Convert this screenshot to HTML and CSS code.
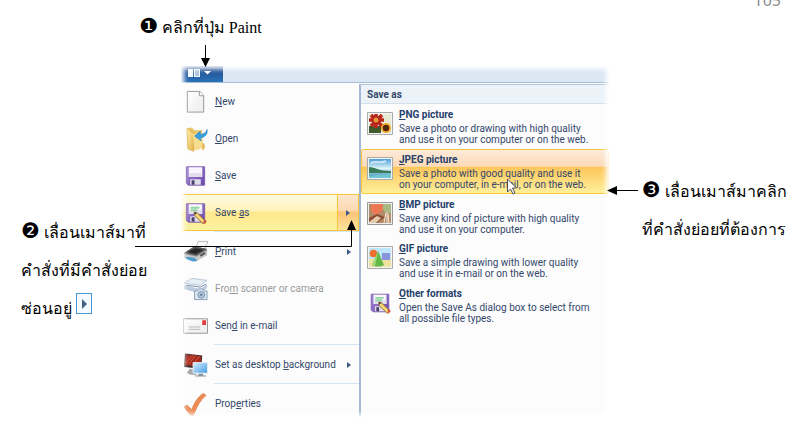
FILE: index.html
```
<!DOCTYPE html>
<html lang="th">
<head>
<meta charset="utf-8">
<title>Paint – Save as</title>
<link rel="stylesheet" href="styles.css">
</head>
<body>
<svg class="defs" aria-hidden="true">
<defs>
<linearGradient id="pur" x2="1" y2="1"><stop offset="0" stop-color="#a98ad6"/><stop offset="1" stop-color="#6c45aa"/></linearGradient>
<linearGradient id="fold" x2="1" y2="1"><stop offset="0" stop-color="#fff0a8"/><stop offset="1" stop-color="#e3b24c"/></linearGradient>
<linearGradient id="sky" y2="1" x2="0"><stop offset="0" stop-color="#4c9ed8"/><stop offset=".5" stop-color="#dff5fa"/><stop offset="1" stop-color="#2488b4"/></linearGradient>
<linearGradient id="scr" x2="1" y2="1"><stop offset="0" stop-color="#d6f0ff"/><stop offset="1" stop-color="#439be6"/></linearGradient>
<linearGradient id="paper" x2="1" y2="1"><stop offset="0" stop-color="#fff"/><stop offset="1" stop-color="#ececec"/></linearGradient>
<symbol id="floppy" viewBox="0 0 26 26"><path d="M3.500 3.500h19v19h-17l-2-2z" fill="url(#pur)" stroke="#7a5cb0"/><path d="M6 4h14v10H6z" fill="#f8f6fc"/><path d="M6 10h14v4H6z" fill="#e2deeb"/><path d="M7.500 16.500h11V22h-11z" fill="#dcdde8"/><path d="M9 17.500h3V22H9z" fill="#4b4070"/></symbol>
<symbol id="pencil" viewBox="0 0 26 26"><path d="M8 7.500h9M8 10h7" stroke="#8fd6a0" stroke-width="2"/><path d="m11.500 12 3 .500 9 9-2.500 3-9-9z" fill="#efc75c" stroke="#8a6430" stroke-width=".8"/><path d="m11.500 12 1 3 2-2z" fill="#333"/><path d="m20.500 22 2.500-2.500 1.500 2.500-2 2.500z" fill="#cb5043"/><path d="m13 14 8.500 8.500" stroke="#fff1a6"/></symbol>
</defs>
</svg>
<p class="page-number">105</p>
<main class="figure">
  <p class="note note-one"><span class="num">❶</span> คลิกที่ปุ่ม Paint</p>
  <p class="note note-two"><span class="num">❷</span> เลื่อนเมาส์มาที่<br>คำสั่งที่มีคำสั่งย่อย<br>ซ่อนอยู่ <span class="key"><svg viewBox="0 0 14 19"><path d="m5 5 5 5-5 5z" fill="#456085"/></svg></span></p>
  <section class="window">
    <div class="tabs">
      <button class="paint-button" aria-label="Paint"><svg viewBox="0 0 42 16"><path d="M7 3h12v8H7z" fill="#f2f8ff"/><path d="M12.500 3v8" stroke="#477ab8"/><path d="M14 5h4M14 7h4M14 9h4" stroke="#6c92c2"/><path d="M23 5h7l-3.500 3.500z" fill="#fff"/></svg></button>
    </div>
    <div class="panes">
      <nav class="menu">
        <button class="item"><svg class="icon" viewBox="0 0 26 26"><path d="M4.500 2h13l4 4v17.500h-17z" fill="url(#paper)" stroke="#989898"/><path d="M17 2v4.500h4.500" fill="#fff" stroke="#989898"/></svg><span><u>N</u>ew</span></button>
        <button class="item"><svg class="icon" viewBox="0 0 26 26"><path d="m4 2 5-1 3 3h8v17l-4 3H5z" fill="#e9c266"/><path d="m4 2 7 5v19l-6-3z" fill="url(#fold)" stroke="#d4a544" stroke-width=".6"/><path d="m10 8 10-2 1 16-9 3z" fill="#f6dd90"/><path d="M20 17c3 0 4 7 0 8" fill="#e3b453"/><path d="M25 3c1 5-2 8-7 9l1 3-7-5 6-5v3c4 0 6-2 7-5z" fill="#38a0df" stroke="#2381bd" stroke-width=".6"/></svg><span><u>O</u>pen</span></button>
        <button class="item"><svg class="icon" viewBox="0 0 26 26"><use href="#floppy"/></svg><span><u>S</u>ave</span></button>
        <button class="item selected"><svg class="icon" viewBox="0 0 26 26"><use href="#floppy"/><use href="#pencil"/></svg><span>Save <u>a</u>s</span><span class="more"><svg viewBox="0 0 4 6"><path d="m0 0 4 3-4 3z"/></svg></span></button>
        <hr>
        <button class="item"><svg class="icon" viewBox="0 0 26 26"><path d="m13 9 3-7h10l-4 9z" fill="#fafafa" stroke="#999" stroke-width=".7"/><path d="m1 14 11-7 13 3v6l-12 7-12-4z" fill="#999"/><path d="m1 14 11-7 13 3-11 7z" fill="#555"/><path d="m5 13 8-4 8 2-8 4z" fill="#252525"/><path d="m1 15 13 3 11-6v4l-12 7-12-4z" fill="#c8c8c8"/><path d="m3 18 9 1 3 3-5 1-7-3z" fill="#4a9ccc"/><path d="m18 17 5-3" stroke="#505050" stroke-width="2"/></svg><span><u>P</u>rint</span><span class="more"><svg viewBox="0 0 4 6"><path d="m0 0 4 3-4 3z"/></svg></span></button>
        <button class="item disabled" disabled><svg class="icon" viewBox="0 0 26 26"><path d="m1 7 8-5 16 2-7 5z" fill="#e8f0f7" stroke="#9eb3c9" stroke-width=".7"/><path d="m1 9 17 4 7-5v4l-7 6-17-5z" fill="#becddd"/><path d="m3 9 15 2 6-3" fill="none" stroke="#758ea9"/><path d="M12 15h3l1-2h5l1 2h3v9H12z" fill="#dde7f0" stroke="#8aa0bb"/><circle cx="19" cy="19" r="3.500" fill="#b6c8dc" stroke="#7891ae"/><circle cx="19" cy="19" r="1.300" fill="#687fa0"/></svg><span>Fro<u>m</u> scanner or camera</span></button>
        <button class="item"><svg class="icon" viewBox="0 0 26 26"><path d="M.500 5.500h25v15H.500z" fill="url(#paper)" stroke="#999"/><path d="M20 7h4v5h-4z" fill="#df3c3c"/><path d="M6 14h12M6 16.500h12" stroke="#b8b8b8"/></svg><span>Sen<u>d</u> in e-mail</span></button>
        <hr>
        <button class="item"><svg class="icon" viewBox="0 0 26 26"><path d="m2 1 18 2-1 14L1 15z" fill="#3b2c2d"/><path d="m3 2 16 2-1 11L2 13z" fill="#a52c20"/><path d="m3 11 8-9M6 12l7-9M10 13l7-9" stroke="#d95638"/><path d="m7 17 5 1v3l3 3-8-1-3-2z" fill="#aaa"/><path d="M10.500 10.500h15v11h-15z" fill="url(#scr)" stroke="#e4edf4"/><path d="M16 22h5v2h3v1H13v-1h3z" fill="#8a949b"/></svg><span>Set as desktop <u>b</u>ackground</span><span class="more"><svg viewBox="0 0 4 6"><path d="m0 0 4 3-4 3z"/></svg></span></button>
        <hr>
        <button class="item"><svg class="icon" viewBox="0 0 26 26"><path d="m1 16 3-2 5 5C12 11 16 5 21 2l3 2C18 9 14 16 11 25H8z" fill="#ed8b54" stroke="#d77745" stroke-width=".7"/></svg><span>Prop<u>e</u>rties</span></button>
      </nav>
      <section class="submenu">
        <h2>Save as</h2>
        <div class="formats">
          <button class="format"><svg class="thumb" viewBox="0 0 26 24"><path d="M.500.500h25v22H.500z" fill="#f4f4f4" stroke="#aaa"/><path d="M2 2h22v19H2z" fill="#e8ead4"/><path d="M2 14h12v7H2z" fill="#3f5b2b"/><g stroke="#bd251b" stroke-width="3.500"><path d="M2 8h15M9 2v14M4 3l11 11M15 3 4 14"/></g><circle cx="9" cy="8" r="4.500" fill="#b3231a"/><circle cx="9" cy="8" r="2.500" fill="#e89c35"/><g stroke="#f5a520" stroke-width="3"><path d="M14 16h10M19 11v10M15.500 12.500l7 7M22.500 12.500l-7 7"/></g><circle cx="19" cy="16" r="3.200" fill="#51290e"/></svg><span class="copy"><b><u>P</u>NG picture</b><span>Save a photo or drawing with high quality<br>and use it on your computer or on the web.</span></span></button>
          <button class="format active"><svg class="thumb" viewBox="0 0 26 24"><path d="M.500.500h25v22H.500z" fill="#f4f4f4" stroke="#aaa"/><path d="M2 2h22v19H2z" fill="url(#sky)"/><path d="M2 10c6 0 9 4 22 4v2H2z" fill="#397b59"/><path d="M2 19c8-2 14 0 22-2v4H2z" fill="#72c6d1"/><path d="M4 6c6-3 8 1 15-2" stroke="#fff" fill="none" stroke-width="2" opacity=".6"/></svg><span class="copy"><b><u>J</u>PEG picture</b><span>Save a photo with good quality and use it<br>on your computer, in e-mail, or on the web.</span></span></button>
          <button class="format"><svg class="thumb" viewBox="0 0 26 24"><path d="M.500.500h25v22H.500z" fill="#eee" stroke="#999"/><path d="M2 2h22v19H2z" fill="#b48b69"/><path d="M5 2h12c1 5-3 8-8 11-5-2-6-7-4-11z" fill="#ed7755"/><path d="M16 2h8v9c-6 1-9-2-8-9z" fill="#a9b985"/><path d="m2 16 8-4 8 3-8 6H2z" fill="#8d4e35"/><path d="m2 20 8-6 4 2-5 5H2z" fill="#e2cbad"/><path d="m17 21 2-10m1 10V10m2 11-1-9" stroke="#f5ead9"/></svg><span class="copy"><b><u>B</u>MP picture</b><span>Save any kind of picture with high quality<br>and use it on your computer.</span></span></button>
          <button class="format"><svg class="thumb" viewBox="0 0 26 24"><path d="M.500.500h25v22H.500z" fill="#f4f4f4" stroke="#aaa"/><path d="M2 2h22v11H2z" fill="#bfe5fa"/><path d="M2 13h22v8H2z" fill="#efe3a2"/><path d="M15 7h8v7h-8z" fill="#8894dc"/><circle cx="6.500" cy="7.500" r="3.800" fill="#ec7130"/><path d="m11 5 6 14c-3 2-9 2-12 0z" fill="#64b646"/><path d="m11 5-3 15-3-1z" fill="#a3db7c"/></svg><span class="copy"><b><u>G</u>IF picture</b><span>Save a simple drawing with lower quality<br>and use it in e-mail or on the web.</span></span></button>
          <button class="format"><svg class="thumb" viewBox="0 0 26 26"><use href="#floppy"/><use href="#pencil"/></svg><span class="copy"><b><u>O</u>ther formats</b><span>Open the Save As dialog box to select from<br>all possible file types.</span></span></button>
        </div>
      </section>
    </div>
  </section>
  <p class="note note-three"><span class="num">❸</span> เลื่อนเมาส์มาคลิก<br>ที่คำสั่งย่อยที่ต้องการ</p>
  <svg class="arrows" viewBox="0 0 795 428" aria-hidden="true">
    <path d="M205.500 45v14M135 246.500h216.500V229M638 190.500h-24" fill="none" stroke="#000" stroke-width="1"/>
    <path d="M201 58h9l-4.500 9zM347 230h9l-4.500-10zM617 186v9l-10-4.500z"/>
    <path d="M507.500 179v13l3-3 2.500 5 2-1-2.500-5h4z" fill="#fff" stroke="#4d4d5a"/>
  </svg>
</main>
</body>
</html>
```
FILE: styles.css
```
* { box-sizing: border-box; }
body {
  margin: 0;
  background: #fff;
  overflow: hidden;
  font-family: Roboto, "Open Sans", sans-serif;
}
p, h2 { margin: 0; }
button {
  border: 0;
  padding: 0;
  background: none;
  font: inherit;
  color: inherit;
  text-align: left;
}
.defs { position: absolute; width: 0; height: 0; }
.page-number {
  height: 8px;
  margin-bottom: -8px;
  padding-right: 14px;
  text-align: right;
  font-family: "Noto Sans", sans-serif;
  font-size: 16px;
  line-height: 0;
  color: #8c8c8c;
}
.figure {
  position: relative;
  display: grid;
  grid-template-columns: 181px minmax(0, 428px) minmax(0, 1fr);
  grid-template-rows: 66px auto;
  align-items: start;
}
.note {
  font-family: "Liberation Serif", serif;
  font-size: 16px;
  line-height: 38px;
  color: #000;
  white-space: nowrap;
}
.num { font-family: "DejaVu Sans", sans-serif; font-size: 21px; line-height: 20px; }
.note-one { grid-column: 1 / -1; padding: 9px 0 0 139px; }
.note-two { padding: 148px 0 0 21px; }
.note-three { padding: 107px 0 0 33px; }
.key { display: inline-block; width: 16px; height: 21px; border: 1px solid #4b9bd2; background: #f4faff; }
.key svg { display: block; }

.window {
  position: relative;
  overflow: hidden;
  height: 351px;
  font-size: 10px;
  color: #33476b;
  background: #fcfcfc;
}
.window::after {
  content: "";
  position: absolute;
  inset: 0;
  box-shadow: inset 0 0 5px 3px #fff;
  pointer-events: none;
}
.tabs { height: 17px; background: #dce7f5; border-bottom: 1px solid #a8bcd6; }
.paint-button { display: block; width: 42px; height: 16px; background: linear-gradient(#1c4487, #2b72b9); }
.paint-button svg { display: block; }
.panes { display: grid; grid-template-columns: 178px minmax(0, 1fr); }
.menu hr { height: 2px; margin: 0 0 0 33px; border: 0; border-top: 1px solid #d7e4f1; }
.item {
  display: flex;
  align-items: center;
  width: 100%;
  height: 37px;
  padding-left: 2px;
  line-height: 14px;
  white-space: nowrap;
}
.icon { flex: none; width: 25px; height: 26px; margin-right: 7px; }
.more {
  display: flex;
  flex: none;
  align-items: center;
  justify-content: center;
  align-self: stretch;
  width: 21px;
  margin-left: auto;
}
.more svg { width: 4px; height: 6px; fill: #3c5884; }
.selected {
  border: 1px solid #fbc638;
  border-left: 0;
  background: linear-gradient(#fffbe2, #fff3ba 45%, #ffe88c 50%, #fff2a0);
}
.selected .more { border-left: 1px solid #fbc638; background: linear-gradient(#fde6d0, #fcd9b0 45%, #fbc477 50%, #fde39a); }
.disabled { color: #9a9a9a; }
.submenu { height: 334px; margin-top: 1px; border-left: 2px solid #a3b6d2; border-top: 1px solid #b4c4da; }
.submenu h2 {
  height: 19px;
  padding-left: 6px;
  border-bottom: 1px solid #d3e0ec;
  background: #ebf2f8;
  font-size: 10px;
  font-weight: 700;
  line-height: 19px;
}
.formats { display: grid; grid-template-rows: repeat(5, 1fr); height: 224px; }
.format {
  display: flex;
  align-items: flex-start;
  gap: 6px;
  padding: 4px 0 0 5px;
  border: 1px solid transparent;
  border-radius: 2px;
  white-space: nowrap;
  line-height: 11px;
}
.format b { display: block; margin-bottom: 2px; font-weight: 700; line-height: 12px; color: #24406b; }
.copy { display: block; }
.thumb { flex: none; width: 26px; height: 24px; margin-top: 3px; }
.active { border-color: #fbc638; background: linear-gradient(#fdeadb, #fcdbb6 38%, #fdc65a 40%, #fff09c); }
.arrows { position: absolute; top: 0; left: 0; width: 795px; height: 428px; pointer-events: none; }
```
